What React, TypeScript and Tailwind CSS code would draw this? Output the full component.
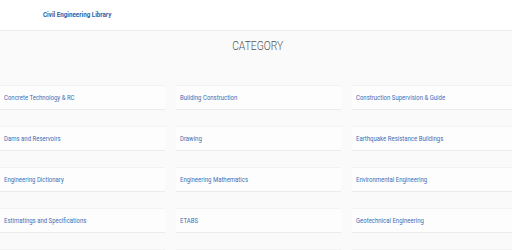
import React from "react";

const items = [
  "Concrete Technology & RC",
  "Building Construction",
  "Construction Supervision & Guide",
  "Dams and Reservoirs",
  "Drawing",
  "Earthquake Resistance Buildings",
  "Engineering Dictionary",
  "Engineering Mathematics",
  "Environmental Engineering",
  "Estimatings and Specifications",
  "ETABS",
  "Geotechnical Engineering",
  "",
  "",
  "",
];

export default function App() {
  return (
    <div className="w-[512px] h-[250px] overflow-hidden bg-[#fafafa]" style={{ fontFamily: "Roboto, 'Liberation Sans', sans-serif" }}>
      <header className="h-[31px] bg-white border-b border-[#ececec] flex items-center pl-[43px]">
        <span className="inline-block origin-left scale-x-[0.78] text-[8px] font-bold text-[#2f62a8] whitespace-nowrap">Civil Engineering Library</span>
      </header>
      <div className="h-[29px] flex items-center justify-center">
        <h1 className="inline-block translate-x-[2px] scale-x-[0.86] text-[12px] font-light text-[#555]">CATEGORY</h1>
      </div>
      <div className="mt-[25px] grid grid-cols-[165px_165px_165px] gap-x-[11px] gap-y-[16px]">
        {items.map((t, i) => (
          <div key={i} className="h-[25px] bg-[#fdfdfd] border-t border-[#f3f3f3] border-b border-b-[#ebebeb] flex items-center pl-[4px]">
            {t && (
              <span className="inline-block origin-left scale-x-[0.8] text-[7.5px] text-[#3b70b6] whitespace-nowrap">{t}</span>
            )}
          </div>
        ))}
      </div>
    </div>
  );
}
